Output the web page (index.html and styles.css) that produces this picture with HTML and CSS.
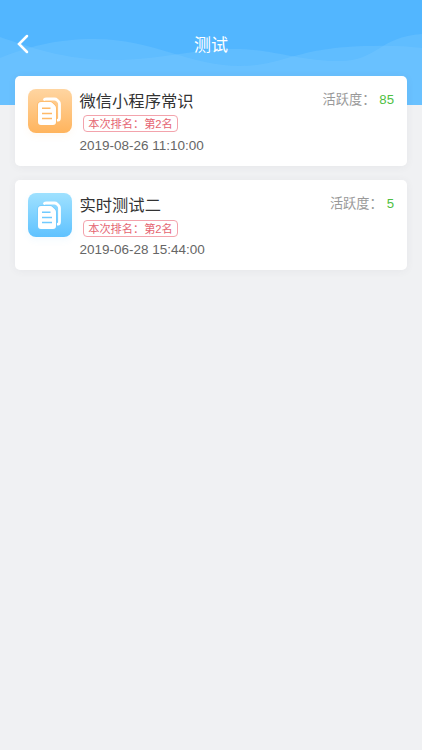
FILE: index.html
```html
<!DOCTYPE html>
<html lang="zh-CN">
<head>
<meta charset="utf-8">
<title>测试</title>
<link rel="stylesheet" href="styles.css">
</head>
<body>
<header class="hero">
  <svg class="waves" viewBox="0 0 422 105" aria-hidden="true">
    <path d="M0 37C29 47 65 60 112 60C161 60 192 49 235 49C273 49 298 61 340 61C377 61 379 37 422 34V105H0Z"/>
    <path d="M0 58C27 47 55 39 95 39C153 39 189 66 240 66C284 66 295 47 370 46Q398 45 422 48V105H0Z"/>
  </svg>
  <nav class="nav">
    <svg class="back" viewBox="0 0 12 20"><path d="M10 2L2 10L10 18"/></svg>
    <h1 class="nav-title">测试</h1>
  </nav>
</header>
<main class="list">
  <article class="card">
    <div class="icon icon-orange">
      <svg viewBox="0 0 44 44">
        <path class="back-page" d="M16.5 10.5Q17 10 18.5 10H26.5Q28 10 29 11L30.5 12.5Q31.5 13.5 31.5 15V28.5Q31.5 31 30 31.2"/>
        <path class="page" d="M13 13H22Q23.5 13 24.7 14.2L26.8 16.3Q28 17.5 28 19V33Q28 36 25 36H13Q10 36 10 33V16Q10 13 13 13Z"/>
        <path class="lines" d="M14 19.2H22.5M14 24.4H24M14 29.6H24"/>
      </svg>
    </div>
    <div class="info">
      <h2 class="name">微信小程序常识</h2>
      <span class="rank">本次排名：第2名</span>
      <time class="time">2019-08-26 11:10:00</time>
    </div>
    <div class="activity"><span>活跃度：</span><b class="score">85</b></div>
  </article>
  <article class="card">
    <div class="icon icon-blue">
      <svg viewBox="0 0 44 44">
        <path class="back-page" d="M16.5 10.5Q17 10 18.5 10H26.5Q28 10 29 11L30.5 12.5Q31.5 13.5 31.5 15V28.5Q31.5 31 30 31.2"/>
        <path class="page" d="M13 13H22Q23.5 13 24.7 14.2L26.8 16.3Q28 17.5 28 19V33Q28 36 25 36H13Q10 36 10 33V16Q10 13 13 13Z"/>
        <path class="lines" d="M14 19.2H22.5M14 24.4H24M14 29.6H24"/>
      </svg>
    </div>
    <div class="info">
      <h2 class="name">实时测试二</h2>
      <span class="rank">本次排名：第2名</span>
      <time class="time">2019-06-28 15:44:00</time>
    </div>
    <div class="activity"><span>活跃度：</span><b class="score">5</b></div>
  </article>
</main>
</body>
</html>
```
FILE: styles.css
```css
* { box-sizing: border-box; }
body {
  margin: 0;
  min-height: 750px;
  background: #f0f1f3;
  font-family: "Liberation Sans", "Noto Sans CJK SC", sans-serif;
}
.hero {
  position: relative;
  height: 105px;
  padding-top: 26px;
  background: #52b6ff;
}
.waves {
  position: absolute;
  inset: 0;
  width: 100%;
  height: 105px;
  fill: #7ac9ff;
  fill-opacity: .34;
}
.nav {
  position: relative;
  display: grid;
  grid-template-columns: 40px 1fr 40px;
  align-items: center;
  height: 40px;
}
.back {
  width: 12px;
  height: 20px;
  margin-left: 17px;
  margin-top: -4px;
  fill: none;
  stroke: #fff;
  stroke-width: 2.5;
  stroke-linecap: round;
}
.nav-title {
  margin: 0;
  color: #fff;
  font-size: 17px;
  font-weight: 400;
  line-height: 24px;
  text-align: center;
}
.list {
  position: relative;
  display: grid;
  gap: 14.4px;
  margin-top: -29px;
  padding: 0 15px;
}
.card {
  display: flex;
  height: 90px;
  padding: 13px;
  border-radius: 5px;
  background: #fff;
  box-shadow: 0 1px 9px rgba(60, 70, 90, .06);
}
.icon {
  width: 44px;
  height: 44px;
  border-radius: 8px;
}
.icon svg { display: block; }
.icon-orange {
  color: #ffb967;
  background: linear-gradient(#ffd5a1, #ffb45d);
  box-shadow: 0 3px 7px rgba(255, 180, 93, .08);
}
.icon-blue {
  color: #70caff;
  background: linear-gradient(#9fe1ff, #5fc2ff);
  box-shadow: 0 3px 7px rgba(95, 194, 255, .08);
}
.back-page {
  fill: none;
  stroke: #fff;
  stroke-width: 2.8;
  stroke-linecap: round;
  stroke-linejoin: round;
}
.page { fill: #fff; stroke: currentColor; stroke-width: 1.6; paint-order: stroke; }
.lines { fill: none; stroke: currentColor; stroke-width: 1.5; }
.info {
  display: flex;
  flex: 1;
  flex-direction: column;
  align-items: flex-start;
  padding-left: 7.5px;
}
.name {
  margin: 0;
  color: #333;
  font-size: 16.3px;
  font-weight: 400;
  line-height: 25px;
}
.rank {
  width: 95px;
  height: 17px;
  margin: 1.2px 0 0 3.5px;
  border: 1px solid #f3a3ac;
  border-radius: 4px;
  color: #e56471;
  font-size: 11.2px;
  line-height: 16px;
  text-align: center;
  white-space: nowrap;
}
.time {
  margin-top: 4.8px;
  color: #666;
  font-size: 13.5px;
  line-height: 18px;
}
.activity {
  color: #999;
  font-size: 13.2px;
  line-height: 22px;
}
.score {
  margin-left: 4px;
  color: #4fbf43;
  font-weight: 400;
}
```
